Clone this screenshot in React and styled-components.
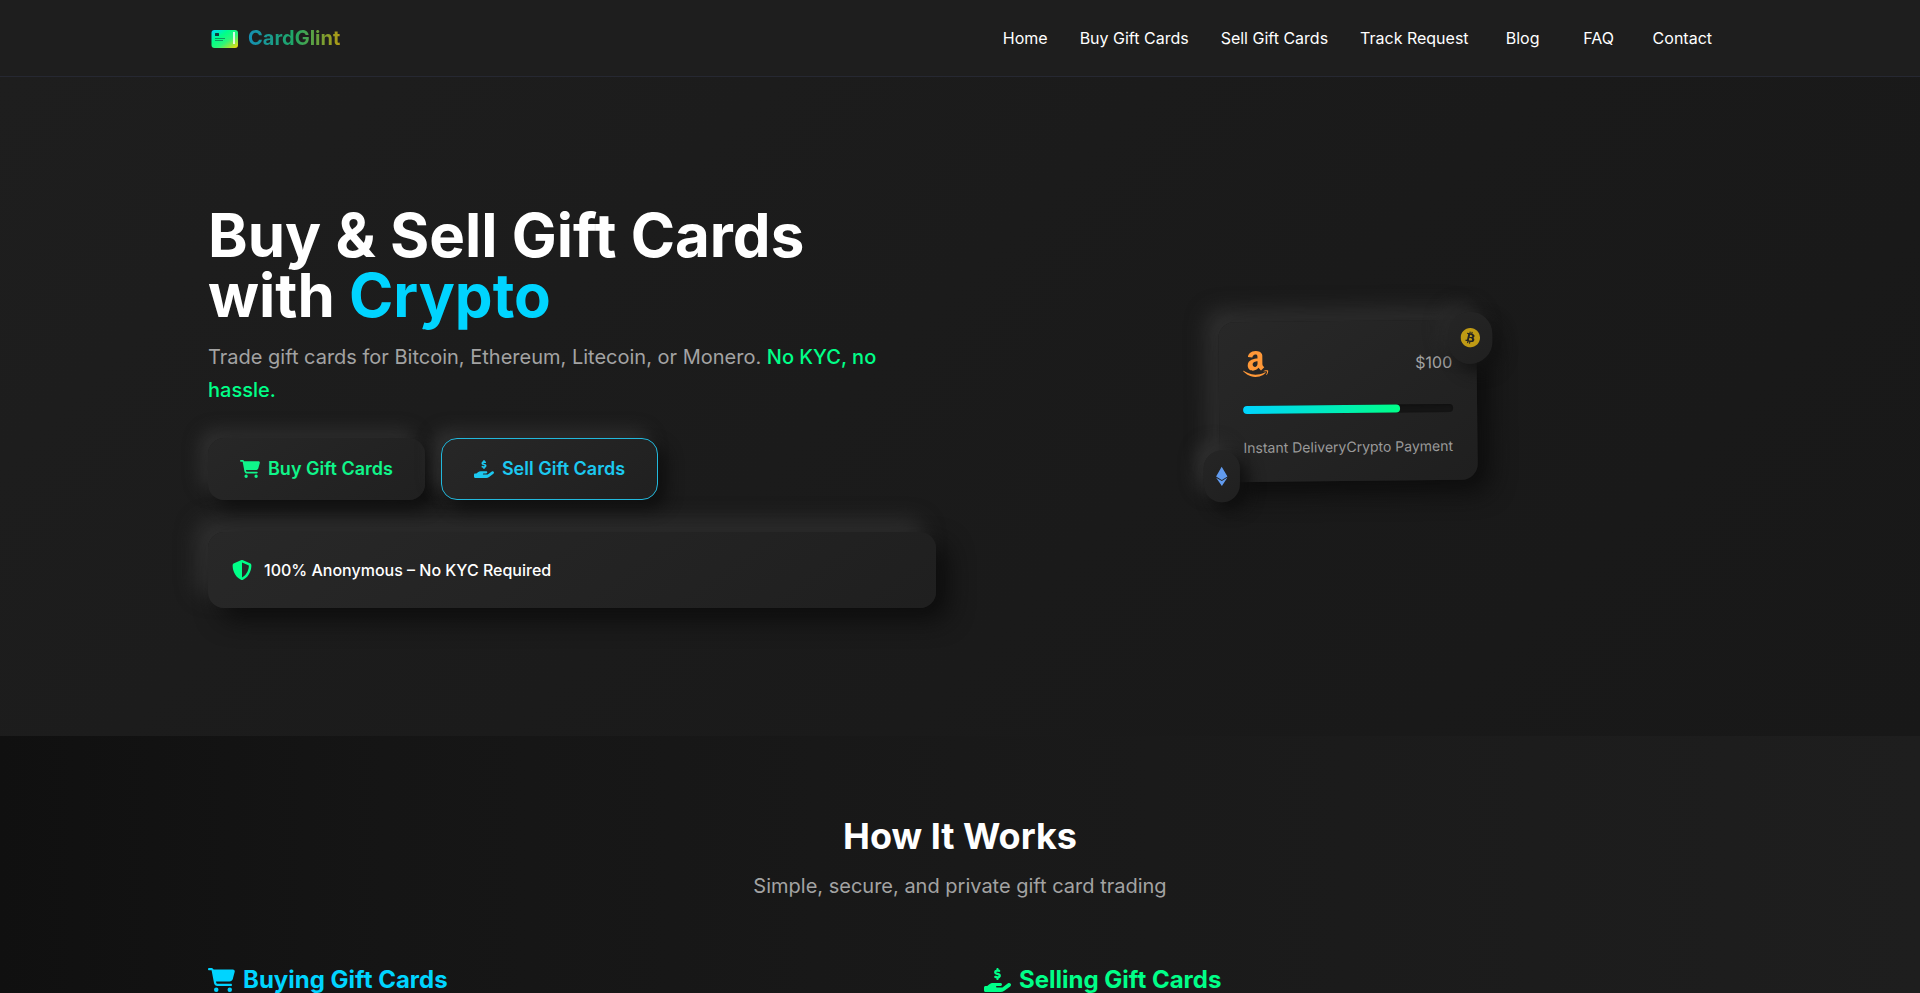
import React from "react";
import styled, { createGlobalStyle, css } from "styled-components";
import {
  FaAmazon,
  FaBitcoin,
  FaCartShopping,
  FaEthereum,
  FaHandHoldingDollar,
  FaShieldHalved,
} from "react-icons/fa6";

const GlobalStyle = createGlobalStyle`
  * {
    box-sizing: border-box;
  }
  body {
    margin: 0;
    background: #141414;
    color: #fff;
    font-family: Inter, "Liberation Sans", sans-serif;
    font-size: 16px;
    line-height: 24px;
    overflow-x: hidden;
  }
  h1, h2, h3, p {
    margin: 0;
  }
  a {
    color: inherit;
    text-decoration: none;
  }
`;

const raised = css`
  background: linear-gradient(145deg, #272727, #202020);
  box-shadow: 8px 8px 16px #0f0f0f, -8px -8px 16px #303030;
`;

const raisedHigh = css`
  background: linear-gradient(145deg, #282828, #1f1f1f);
  box-shadow: 12px 12px 24px #0d0d0d, -12px -12px 20px #303030;
`;

const Container = styled.div`
  max-width: 1536px;
  margin: 0 auto;
  padding: 0 16px;
`;

const Header = styled.header`
  background: #1e1e1e;
  border-bottom: 1px solid #262832;
`;

const HeaderRow = styled(Container)`
  display: flex;
  align-items: center;
  justify-content: space-between;
  height: 76px;
`;

const Brand = styled.a`
  display: flex;
  align-items: center;
  gap: 8px;
`;

const BrandName = styled.span`
  font-size: 20px;
  line-height: 28px;
  font-weight: 700;
  color: transparent;
  background: linear-gradient(90deg, #158fb4, #1fa765 50%, #b09a14);
  background-clip: text;
`;

const Nav = styled.nav`
  display: flex;
  gap: 32px;
  a {
    min-width: 44px;
    text-align: center;
    &:hover {
      color: #00d4ff;
    }
  }
`;

const Hero = styled.section`
  padding: 128px 0;
  background: linear-gradient(135deg, #1e1e1e, #1a1a1a 60%, #181818);
`;

const Columns = styled(Container)`
  display: grid;
  grid-template-columns: 1fr 1fr;
  gap: 48px;
  align-items: center;
  @media (max-width: 900px) {
    grid-template-columns: 1fr;
  }
`;

const HeroTitle = styled.h1`
  font-size: 60px;
  line-height: 60px;
  font-weight: 700;
  margin-bottom: 16px;
  span {
    color: #00d4ff;
  }
`;

const HeroText = styled.p`
  font-size: 20px;
  line-height: 33px;
  color: #a3a3a3;
  margin-bottom: 31px;
  span {
    color: #00ff88;
    font-weight: 500;
  }
`;

const Actions = styled.div`
  display: flex;
  flex-wrap: wrap;
  gap: 16px;
  margin-bottom: 32px;
`;

const ActionButton = styled.button`
  ${raised}
  display: flex;
  align-items: center;
  gap: 8px;
  padding: 16px 32px;
  border: ${({ $outlined }) => ($outlined ? "1px solid #22b8dc" : "none")};
  border-radius: 16px;
  color: ${({ $outlined }) => ($outlined ? "#1cc8f0" : "#10f58a")};
  font-family: inherit;
  font-size: 18px;
  line-height: 28px;
  font-weight: 600;
  cursor: pointer;
  svg {
    width: 20px;
    height: 18px;
  }
`;

const TrustBox = styled.div`
  ${raisedHigh}
  display: flex;
  align-items: center;
  gap: 12px;
  padding: 24px;
  border-radius: 16px;
  line-height: 28px;
  font-weight: 500;
  svg {
    color: #00ff88;
    font-size: 20px;
  }
`;

const Preview = styled.div`
  display: flex;
  justify-content: center;
`;

const GiftCard = styled.div`
  ${raisedHigh}
  position: relative;
  min-width: 256px;
  padding: 24px;
  margin-bottom: 12px;
  border-radius: 16px;
  transform: rotate(-0.6deg);
`;

const CardTop = styled.div`
  display: flex;
  align-items: center;
  justify-content: space-between;
  height: 36px;
  margin-bottom: 24px;
  color: #a3a3a3;
  svg {
    color: #ff9838;
    width: 26px;
    height: 30px;
  }
`;

const Progress = styled.div`
  height: 8px;
  margin-bottom: 24px;
  border-radius: 4px;
  background: #151515;
  box-shadow: inset 1px 1px 3px #0f0f0f;
  div {
    height: 100%;
    border-radius: 4px;
    background: linear-gradient(90deg, #00d4ff, #00ff88);
  }
`;

const CardBottom = styled.div`
  display: flex;
  justify-content: space-between;
  font-size: 14px;
  line-height: 20px;
  color: #9a9a9a;
`;

const CoinBadge = styled.div`
  ${raised}
  background: linear-gradient(145deg, #252525, #202020);
  position: absolute;
  display: flex;
  align-items: center;
  justify-content: center;
  height: 52px;
  padding: 0 12px;
  border-radius: 26px;
  font-size: 20px;
`;

const BitcoinBadge = styled(CoinBadge)`
  top: -8px;
  right: -16px;
  color: #bf9a14;
  box-shadow: 8px 8px 16px #131313, -8px -8px 16px #292929;
`;

const EthereumBadge = styled(CoinBadge)`
  bottom: -20px;
  left: -16px;
  color: #619bef;
  svg {
    width: 12px;
  }
`;

const Steps = styled.section`
  padding: 80px 0;
  background: linear-gradient(90deg, #101010, #151515 20%, #191919 50%, #1e1e1e);
`;

const SectionHead = styled.div`
  text-align: center;
  margin-bottom: 64px;
  h2 {
    font-size: 36px;
    line-height: 40px;
    font-weight: 700;
    margin-bottom: 16px;
  }
  p {
    font-size: 20px;
    line-height: 28px;
    color: #a3a3a3;
  }
`;

const StepsTitle = styled.h3`
  display: flex;
  align-items: center;
  gap: 8px;
  font-size: 24px;
  line-height: 32px;
  font-weight: 700;
  color: ${({ $color }) => $color};
  svg {
    width: 27px;
    height: 24px;
  }
`;

const links = ["Home", "Buy Gift Cards", "Sell Gift Cards", "Track Request", "Blog", "FAQ", "Contact"];

function LogoMark() {
  return (
    <svg width="32" height="32" viewBox="0 0 32 32" aria-hidden="true">
      <defs>
        <linearGradient id="logo-fill" x1="0" y1="0" x2="1" y2="1">
          <stop offset="0" stopColor="#00d4ff" />
          <stop offset="0.35" stopColor="#00ff88" />
          <stop offset="0.6" stopColor="#2cf57a" />
          <stop offset="1" stopColor="#ffd700" />
        </linearGradient>
      </defs>
      <rect x="3.5" y="8" width="26.5" height="18" rx="3" fill="url(#logo-fill)" />
      <rect x="7" y="11" width="4" height="3" rx="0.5" fill="#10343c" />
      <path d="M7 16.5h10M7 18.5h8" stroke="#0e7c58" strokeWidth="0.8" />
      <rect x="25" y="10" width="2" height="12" fill="#fff" opacity="0.8" />
    </svg>
  );
}

function App() {
  return (
    <>
      <GlobalStyle />
      <Header>
        <HeaderRow>
          <Brand href="#home">
            <LogoMark />
            <BrandName>CardGlint</BrandName>
          </Brand>
          <Nav>
            {links.map((label) => (
              <a key={label} href={`#${label.toLowerCase().replaceAll(" ", "-")}`}>
                {label}
              </a>
            ))}
          </Nav>
        </HeaderRow>
      </Header>
      <main>
        <Hero>
          <Columns>
            <div>
              <HeroTitle>
                Buy &amp; Sell Gift Cards
                <br />
                with <span>Crypto</span>
              </HeroTitle>
              <HeroText>
                Trade gift cards for Bitcoin, Ethereum, Litecoin, or Monero.{" "}
                <span>No KYC, no hassle.</span>
              </HeroText>
              <Actions>
                <ActionButton type="button">
                  <FaCartShopping />
                  Buy Gift Cards
                </ActionButton>
                <ActionButton type="button" $outlined>
                  <FaHandHoldingDollar />
                  Sell Gift Cards
                </ActionButton>
              </Actions>
              <TrustBox>
                <FaShieldHalved />
                100% Anonymous – No KYC Required
              </TrustBox>
            </div>
            <Preview>
              <GiftCard>
                <CardTop>
                  <FaAmazon />
                  <span>$100</span>
                </CardTop>
                <Progress>
                  <div style={{ width: "75%" }} />
                </Progress>
                <CardBottom>
                  <span>Instant Delivery</span>
                  <span>Crypto Payment</span>
                </CardBottom>
                <BitcoinBadge>
                  <FaBitcoin />
                </BitcoinBadge>
                <EthereumBadge>
                  <FaEthereum />
                </EthereumBadge>
              </GiftCard>
            </Preview>
          </Columns>
        </Hero>
        <Steps>
          <SectionHead>
            <h2>How It Works</h2>
            <p>Simple, secure, and private gift card trading</p>
          </SectionHead>
          <Columns>
            <StepsTitle $color="#00d4ff">
              <FaCartShopping />
              Buying Gift Cards
            </StepsTitle>
            <StepsTitle $color="#00ff88">
              <FaHandHoldingDollar />
              Selling Gift Cards
            </StepsTitle>
          </Columns>
        </Steps>
      </main>
    </>
  );
}

export default App;
